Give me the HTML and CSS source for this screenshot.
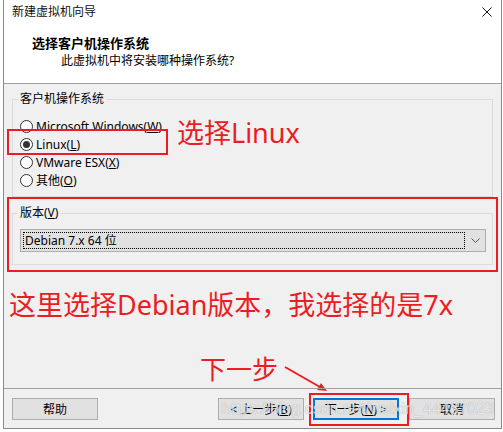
FILE: index.html
```html
<!DOCTYPE html>
<html lang="zh-CN">
<head>
    <meta charset="UTF-8">
    <meta name="viewport" content="width=device-width, initial-scale=1.0">
    <title>新建虚拟机向导</title>
    <link rel="stylesheet" href="styles.css">
</head>
<body>
    <div class="window">
        <div class="header">
            <div class="titlebar">
                <span class="title">新建虚拟机向导</span>
                <svg class="close" width="10" height="10" viewBox="0 0 10 10">
                    <path d="M0.5 0.5 L9.5 9.5 M9.5 0.5 L0.5 9.5" stroke="#111" stroke-width="1" fill="none"/>
                </svg>
            </div>
            <div class="heading">选择客户机操作系统</div>
            <div class="subheading">此虚拟机中将安装哪种操作系统?</div>
        </div>

        <div class="main">
            <fieldset class="group os-group">
                <legend>客户机操作系统</legend>
                <div class="radio"><span class="circle"></span>Microsoft Windows(<u>W</u>)</div>
                <div class="radio checked"><span class="circle"></span>Linux(<u>L</u>)</div>
                <div class="radio"><span class="circle"></span>VMware ESX(<u>X</u>)</div>
                <div class="radio"><span class="circle"></span>其他(<u>O</u>)</div>
            </fieldset>

            <fieldset class="group version-group">
                <legend>版本(<u>V</u>)</legend>
                <div class="combo">
                    <span class="combo-value">Debian 7.x 64 位</span>
                    <svg class="chevron" width="9" height="5" viewBox="0 0 9 5">
                        <path d="M0.5 0.5 L4.5 4.5 L8.5 0.5" stroke="#555" stroke-width="1" fill="none"/>
                    </svg>
                </div>
            </fieldset>

            <p class="note">这里选择Debian版本，我选择的是7x</p>

            <!-- annotations drawn on top of the dialog -->
            <div class="mark mark-linux"></div>
            <div class="label label-linux">选择Linux</div>
            <div class="mark mark-version"></div>
            <div class="label label-next">下一步</div>
            <svg class="arrow" width="56" height="34" viewBox="0 0 56 34">
                <path d="M5 5 L40 25" stroke="#ec1c24" stroke-width="2" fill="none"/>
                <polygon points="47,29 37.2,28.1 41,21.1" fill="#ec1c24"/>
            </svg>
        </div>

        <div class="footer">
            <button class="btn">帮助</button>
            <div class="nav">
                <button class="btn">&lt; 上一步(<u>B</u>)</button>
                <button class="btn default">下一步(<u>N</u>) &gt;</button>
                <button class="btn">取消</button>
            </div>
            <div class="mark mark-next"></div>
            <div class="watermark">https://blog.csdn.net/weixin_44437023</div>
        </div>
    </div>
</body>
</html>
```

FILE: styles.css
```css
body {
    margin: 0;
    background-color: #fff;
    font-family: "Noto Sans", "Noto Sans CJK SC", sans-serif;
    font-size: 12px;
    color: #000;
}

.window {
    display: flex;
    flex-direction: column;
    box-sizing: border-box;
    margin-left: 3px;
    width: 499px;
    height: 429px;
    background-color: #f0f0f0;
    border: 1px solid #8a8a8a;
    border-top: none;
}

/* white top panel */
.header {
    height: 83px;
    background-color: #fff;
    border-bottom: 1px solid #a0a0a0;
}

.titlebar {
    display: flex;
    justify-content: space-between;
    align-items: center;
    height: 24px;
    padding: 0 9px 0 8px;
}

.title {
    line-height: 24px;
    color: #111;
}

.heading {
    margin-top: 10px;
    padding-left: 28px;
    line-height: 18px;
    font-size: 13px;
    font-weight: bold;
}

.subheading {
    padding-left: 57px;
    line-height: 18px;
}

.main {
    position: relative;
    flex: 1;
}

.group {
    margin: 7px 8px 0 8px;
    padding: 10px 6px 7px 5px;
    min-width: 0;
    border: 1px solid #dcdcdc;
}

.group legend {
    padding: 0 2px;
    line-height: 16px;
}

.version-group {
    margin-top: 8px;
    padding-top: 8px;
    padding-bottom: 12px;
}

.radio {
    display: flex;
    align-items: center;
    height: 18px;
    padding-left: 2px;
}

.circle {
    box-sizing: border-box;
    width: 13px;
    height: 13px;
    margin-right: 3px;
    border: 1px solid #333;
    border-radius: 50%;
    background-color: #fff;
    position: relative;
}

.checked .circle::after {
    content: "";
    position: absolute;
    left: 2px;
    top: 2px;
    width: 7px;
    height: 7px;
    border-radius: 50%;
    background-color: #333;
}

.combo {
    display: flex;
    align-items: center;
    box-sizing: border-box;
    height: 23px;
    margin-left: 2px;
    padding: 2px;
    background-color: #e1e1e1;
    border: 1px solid #adadad;
}

.combo-value {
    box-sizing: border-box;
    width: 442px;
    height: 17px;
    padding-left: 1px;
    line-height: 15px;
    border: 1px dotted #000;
}

.chevron {
    margin-left: 6px;
}

.note {
    margin: 25px 0 0 5px;
    line-height: 30px;
    font-size: 27px;
    color: #ec1c24;
    white-space: nowrap;
}

.mark {
    position: absolute;
    box-sizing: border-box;
    border: 2px solid #ec1c24;
}

.mark-linux {
    left: 3px;
    top: 45px;
    width: 161px;
    height: 26px;
}

.mark-version {
    left: 3px;
    top: 113px;
    width: 491px;
    height: 75px;
}

.label {
    position: absolute;
    font-size: 27px;
    line-height: 27px;
    color: #ec1c24;
    white-space: nowrap;
}

.label-linux {
    left: 173px;
    top: 35px;
}

.label-next {
    left: 196px;
    top: 272px;
    font-size: 26px;
}

.arrow {
    position: absolute;
    left: 276px;
    top: 278px;
}

.footer {
    position: relative;
    display: flex;
    justify-content: space-between;
    padding: 9px 6px 8px 8px;
    border-top: 1px solid #a0a0a0;
}

.nav {
    display: flex;
    gap: 9px;
}

.btn {
    box-sizing: border-box;
    width: 86px;
    height: 22px;
    padding: 0;
    font-family: inherit;
    font-size: 12px;
    color: #000;
    background-color: #e1e1e1;
    border: 1px solid #adadad;
}

.btn.default {
    border: 2px solid #0078d7;
    margin-right: 1px;
}

.mark-next {
    left: 305px;
    top: 4px;
    width: 100px;
    height: 33px;
}

.watermark {
    position: absolute;
    left: 218px;
    top: 10px;
    font-family: "Liberation Sans", sans-serif;
    font-size: 16px;
    line-height: 20px;
    color: rgba(255, 255, 255, 0.75);
    text-shadow: 0 0 1px rgba(0, 0, 0, 0.35);
    white-space: nowrap;
}
```
